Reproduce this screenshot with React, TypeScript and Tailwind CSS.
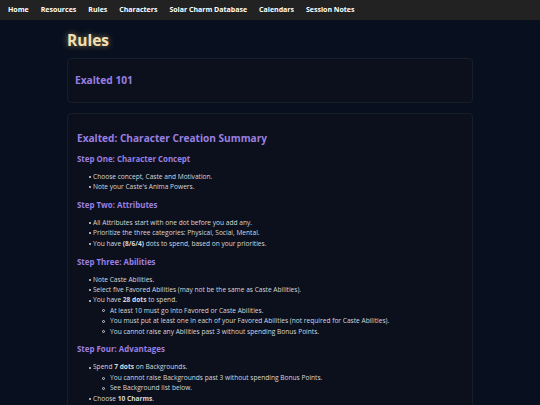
import React from "react";

const navItems = ["Home", "Resources", "Rules", "Characters", "Solar Charm Database", "Calendars", "Session Notes"];

function Step({ title, children }: { title: string; children: React.ReactNode }) {
  return (
    <section className="mt-[6.5px]">
      <h3 className="text-[7.9px] font-bold text-[#9a7fe0] leading-[12px]">{title}</h3>
      {children}
    </section>
  );
}

function List({ children, nested }: { children: React.ReactNode; nested?: boolean }) {
  return <ul className={nested ? "pl-[13px]" : "pl-[11.5px] mt-[7px]"}>{children}</ul>;
}

function Li({ children, sub, nested }: { children: React.ReactNode; sub?: React.ReactNode; nested?: boolean }) {
  return (
    <li className="text-[6.6px] leading-[10.4px] text-[#d6d8de]">
      <div className="flex items-center">
        <span
          className={
            nested
              ? "w-[3px] h-[3px] rounded-full border-[0.8px] border-[#cfd2d8] mr-[5.5px] shrink-0"
              : "w-[2px] h-[2px] rounded-full bg-[#d6d8de] mr-[2.5px] shrink-0"
          }
        />
        <span>{children}</span>
      </div>
      {sub}
    </li>
  );
}

export default function App() {
  return (
    <div className="min-h-screen bg-[#08101f] font-['Open_Sans',sans-serif]">
      <nav className="h-[20px] bg-[#222222] flex items-center pl-[8px] gap-[12px]">
        {navItems.map((n) => (
          <a key={n} className="text-[7px] font-bold text-white whitespace-nowrap">
            {n}
          </a>
        ))}
      </nav>

      <main className="w-[406px] mx-auto pt-[8px]">
        <h1 className="text-[15.5px] font-bold text-[#f4e0b4] leading-[24px] [text-shadow:0_0_6px_rgba(240,200,120,0.6)]">
          Rules
        </h1>

        <div className="mt-[6px] h-[45px] rounded-[4px] border border-[#181d2a] bg-[#0b101c] px-[7px] flex items-center">
          <h2 className="text-[10.2px] font-bold text-[#9a7fe0] pt-[1px]">Exalted 101</h2>
        </div>

        <div className="mt-[10px] rounded-[4px] border border-[#181d2a] bg-[#0b101c] px-[9px] pt-[16px] pb-[12px]">
          <h2 className="text-[10.1px] font-bold text-[#9a7fe0] leading-[16px]">Exalted: Character Creation Summary</h2>

          <Step title="Step One: Character Concept">
            <List>
              <Li>Choose concept, Caste and Motivation.</Li>
              <Li>Note your Caste's Anima Powers.</Li>
            </List>
          </Step>

          <Step title="Step Two: Attributes">
            <List>
              <Li>All Attributes start with one dot before you add any.</Li>
              <Li>Prioritize the three categories: Physical, Social, Mental.</Li>
              <Li>
                You have <b>(8/6/4)</b> dots to spend, based on your priorities.
              </Li>
            </List>
          </Step>

          <Step title="Step Three: Abilities">
            <List>
              <Li>Note Caste Abilities.</Li>
              <Li>Select five Favored Abilities (may not be the same as Caste Abilities).</Li>
              <Li
                sub={
                  <List nested>
                    <Li nested>At least 10 must go into Favored or Caste Abilities.</Li>
                    <Li nested>You must put at least one in each of your Favored Abilities (not required for Caste Abilities).</Li>
                    <Li nested>You cannot raise any Abilities past 3 without spending Bonus Points.</Li>
                  </List>
                }
              >
                You have <b>28 dots</b> to spend.
              </Li>
            </List>
          </Step>

          <Step title="Step Four: Advantages">
            <List>
              <Li
                sub={
                  <List nested>
                    <Li nested>You cannot raise Backgrounds past 3 without spending Bonus Points.</Li>
                    <Li nested>See Background list below.</Li>
                  </List>
                }
              >
                Spend <b>7 dots</b> on Backgrounds.
              </Li>
              <Li>
                Choose <b>10 Charms</b>.
              </Li>
            </List>
          </Step>
        </div>
      </main>
    </div>
  );
}
